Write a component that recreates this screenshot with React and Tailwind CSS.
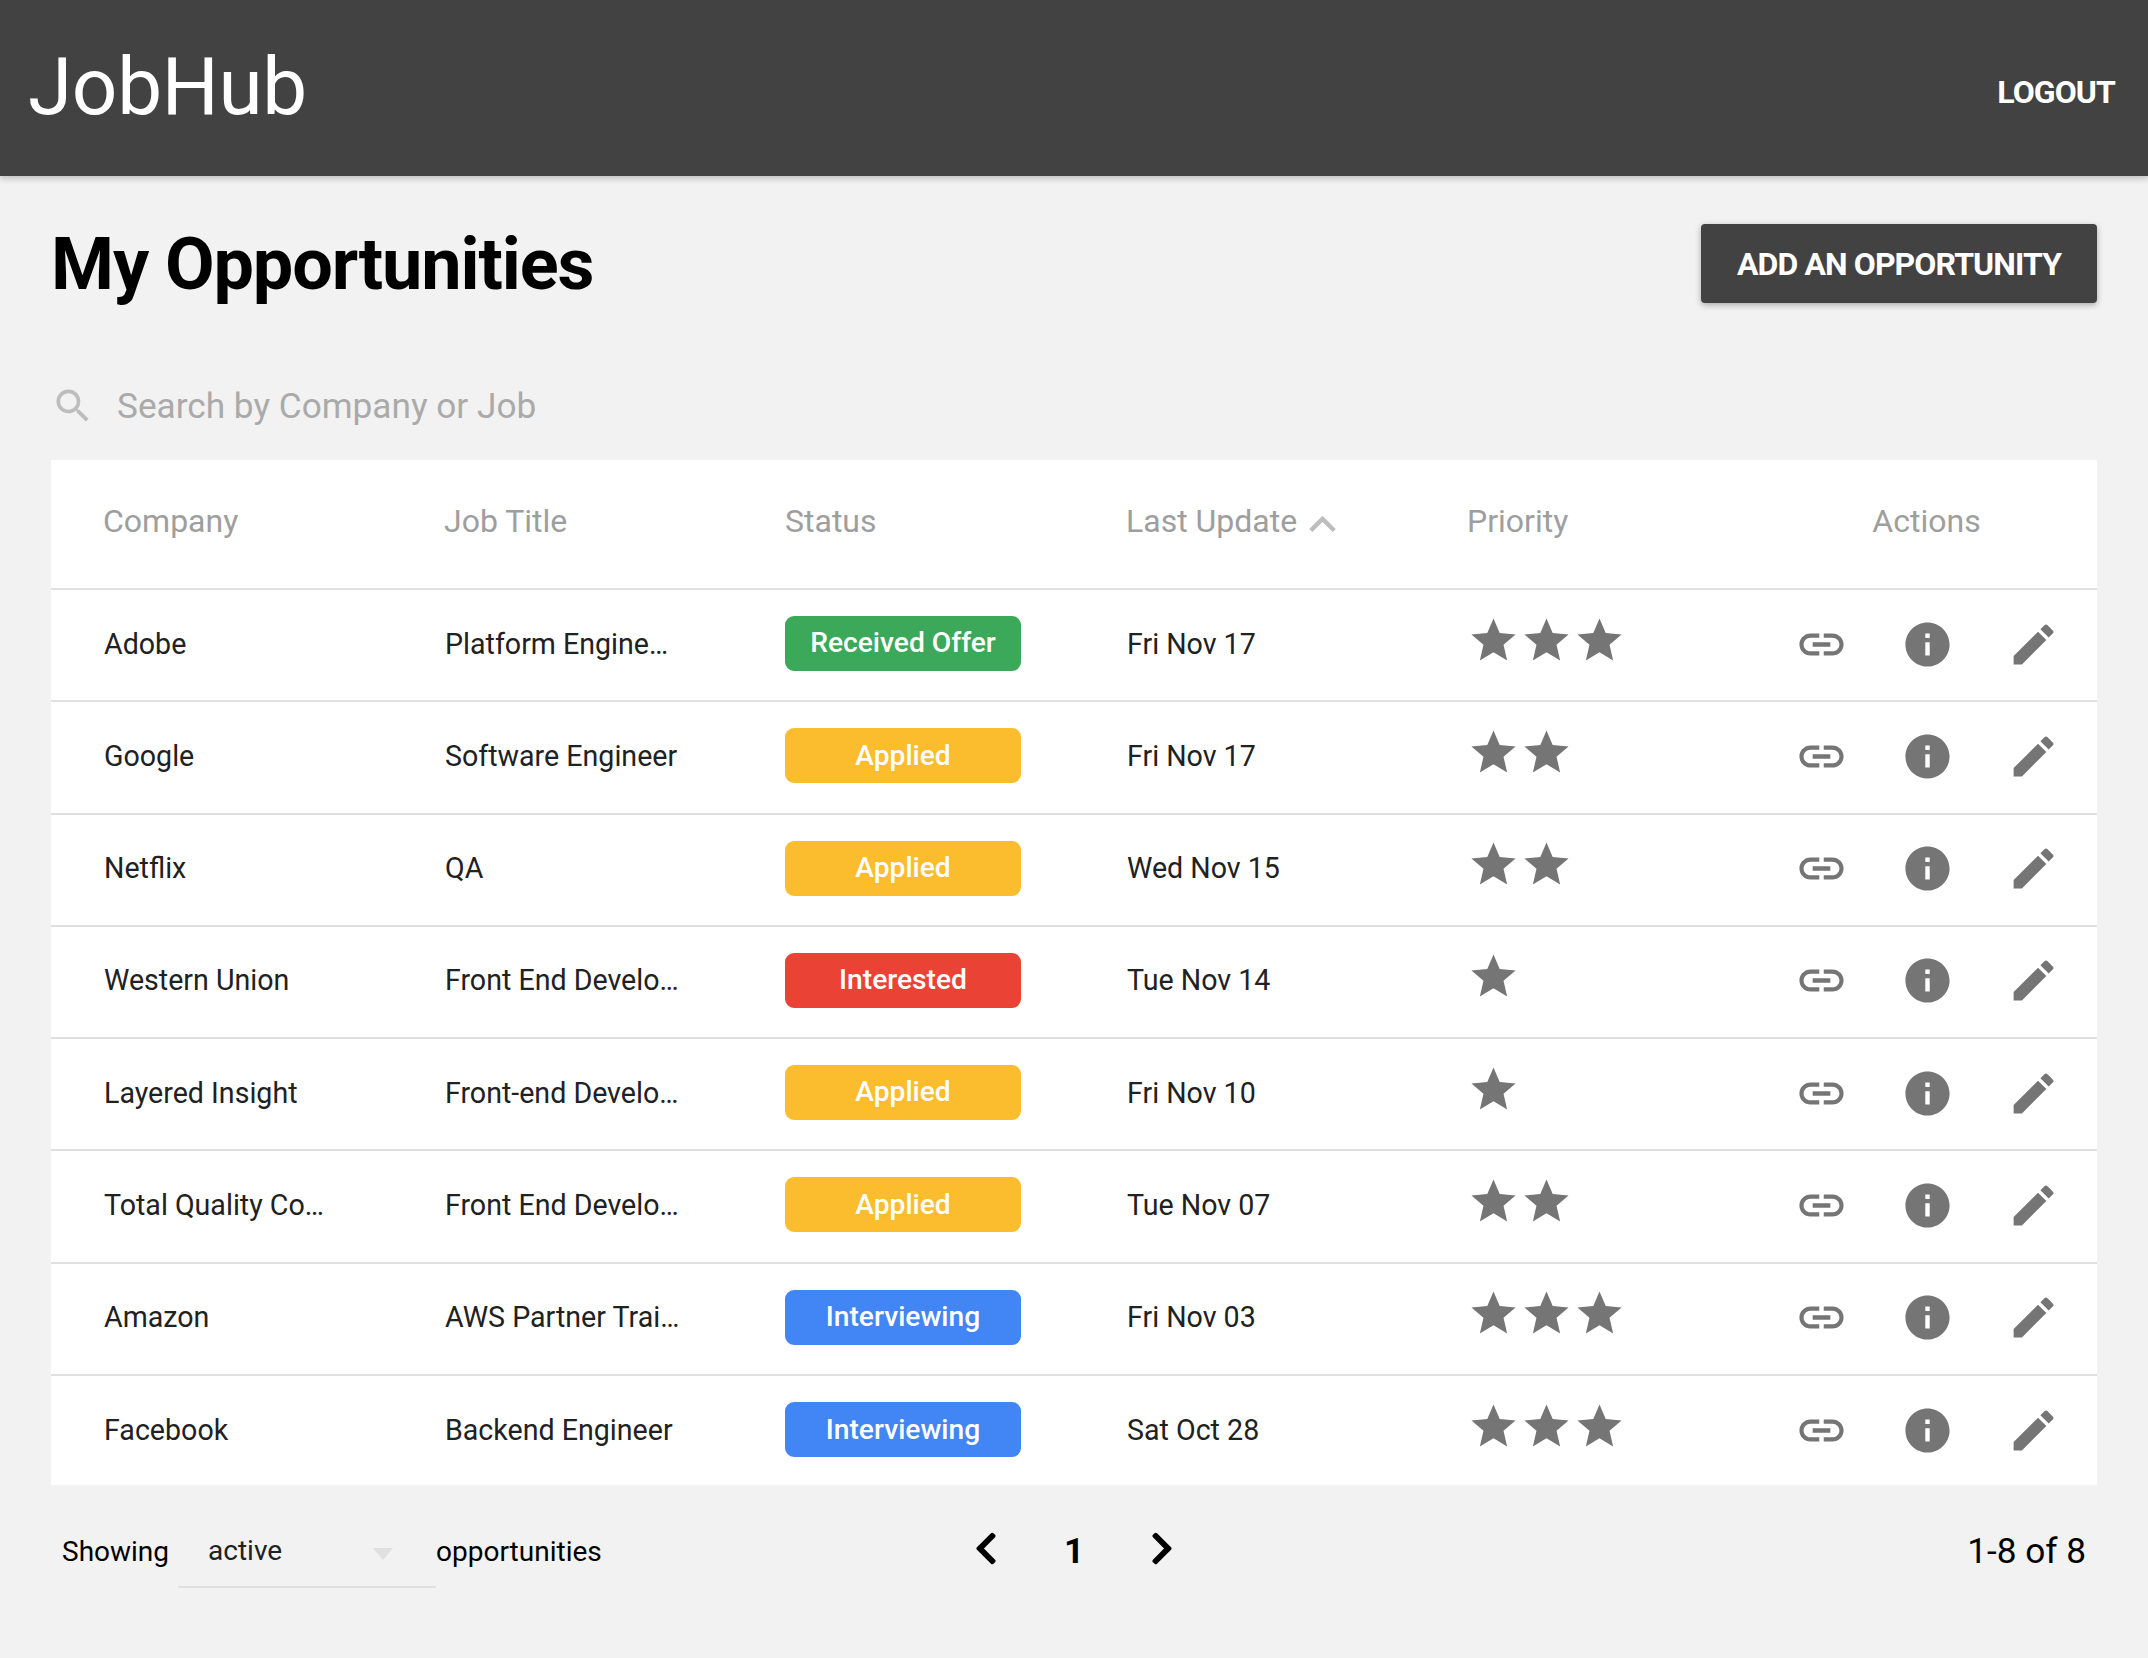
import React from "react";
import { MdStar, MdLink, MdInfo, MdEdit, MdSearch, MdExpandLess } from "react-icons/md";
import { FaChevronLeft, FaChevronRight } from "react-icons/fa";

const rows = [
  ["Adobe", "Platform Engine…", "Received Offer", "bg-[#3ca85a]", "Fri Nov 17", 3],
  ["Google", "Software Engineer", "Applied", "bg-[#fbbc2d]", "Fri Nov 17", 2],
  ["Netflix", "QA", "Applied", "bg-[#fbbc2d]", "Wed Nov 15", 2],
  ["Western Union", "Front End Develo…", "Interested", "bg-[#ea4335]", "Tue Nov 14", 1],
  ["Layered Insight", "Front-end Develo…", "Applied", "bg-[#fbbc2d]", "Fri Nov 10", 1],
  ["Total Quality Co…", "Front End Develo…", "Applied", "bg-[#fbbc2d]", "Tue Nov 07", 2],
  ["Amazon", "AWS Partner Trai…", "Interviewing", "bg-[#4285f4]", "Fri Nov 03", 3],
  ["Facebook", "Backend Engineer", "Interviewing", "bg-[#4285f4]", "Sat Oct 28", 3],
];

const gridCols = "grid grid-cols-[341px_341px_341px_341px_1fr] pl-[52px] items-center";

function Row({ r, last }) {
  return (
    <div className={`${gridCols} text-[28.6px] text-[#212121] ${last ? "h-[109.25px]" : "h-[112.25px] border-b-2 border-[#e0e0e0] pb-[2px]"}`}>
      <div className="pl-px">{r[0]}</div>
      <div className="pl-px">{r[1]}</div>
      <div>
        <div className={`${r[3]} w-[236px] h-[55px] -mt-[1px] rounded-[9px] flex items-center justify-center text-white text-[28.2px] font-medium`}>{r[2]}</div>
      </div>
      <div className="pl-px">{r[4]}</div>
      <div className="flex items-center justify-between pr-[37px]">
        <div className="flex -mt-[8px]">
          {Array.from({ length: r[5] }).map((_, i) => (
            <MdStar key={i} className="w-[53px] h-[53px] text-[#757575]" />
          ))}
        </div>
        <div className="flex gap-[53px] text-[#757575]">
          <MdLink className="w-[53px] h-[53px]" />
          <MdInfo className="w-[53px] h-[53px]" />
          <MdEdit className="w-[53px] h-[53px]" />
        </div>
      </div>
    </div>
  );
}

export default function App() {
  return (
    <div className="min-h-[1658px] bg-[#f2f2f2] font-['Roboto',sans-serif]">
      <header className="h-[176px] bg-[#424242] shadow-[0_3px_6px_rgba(0,0,0,0.2)] flex items-center justify-between pl-[28px] pr-[33px] text-white">
        <div className="text-[80px] font-normal leading-none tracking-[-0.3px] -mt-[2px]">JobHub</div>
        <div className="text-[32px] font-bold tracking-[-0.9px] mt-[8px]">LOGOUT</div>
      </header>
      <main className="px-[51px]">
        <div className="flex items-center justify-between pt-[48px]">
          <h1 className="text-[72px] font-bold text-black leading-none tracking-[-1.1px] mt-[2px]">My Opportunities</h1>
          <button className="w-[396px] h-[79px] bg-[#424242] text-white text-[32px] font-bold tracking-[-0.9px] rounded-[4px] shadow-[0_2px_6px_rgba(0,0,0,0.3)]">ADD AN OPPORTUNITY</button>
        </div>
        <div className="flex items-center h-[44px] mt-[81px] gap-[22px]">
          <MdSearch className="w-[44px] h-[44px] text-[#bdbdbd]" />
          <span className="text-[35.2px] text-[#aaaaaa]">Search by Company or Job</span>
        </div>
        <div className="bg-white mt-[32px]">
          <div className={`${gridCols} h-[130px] pb-[6px] text-[32px] text-[#9e9e9e] border-b-2 border-[#e0e0e0]`}>
            <div>Company</div>
            <div>Job Title</div>
            <div>Status</div>
            <div className="flex items-center">Last Update <MdExpandLess className="w-[53px] h-[53px] text-[#bdbdbd] -ml-px mt-[-4px] mb-[-11px]" /></div>
            <div className="flex items-center justify-between pr-[37px]">
              <div>Priority</div>
              <div className="w-[265px] pr-[2px] text-center">Actions</div>
            </div>
          </div>
          {rows.map((r, i) => <Row key={i} r={r} last={i === rows.length - 1} />)}
        </div>
        <div className="grid grid-cols-3 items-center mt-[31px]">
          <div className="flex items-center text-[28px] text-black pl-[11px]">
            <span className="mr-[9px]">Showing</span>
            <div className="relative w-[258px] h-[72px] flex items-center pl-[30px] border-b-2 border-[#e0e0e0] text-[#212121]">
              active
              <div className="absolute left-[195px] top-[32px] w-0 h-0 border-l-[10px] border-r-[10px] border-t-[12px] border-l-transparent border-r-transparent border-t-[#e0e0e0]" />
            </div>
            <span>opportunities</span>
          </div>
          <div className="flex items-center justify-center gap-[66px] text-black">
            <FaChevronLeft className="w-[24px] h-[37px] -mt-[6px]" />
            <span className="text-[35.2px] font-bold -mt-[2px]">1</span>
            <FaChevronRight className="w-[24px] h-[37px] -mt-[6px]" />
          </div>
          <div className="text-right text-[35.2px] text-black pr-[11px] -mt-[2px]">1-8 of 8</div>
        </div>
      </main>
    </div>
  );
}
